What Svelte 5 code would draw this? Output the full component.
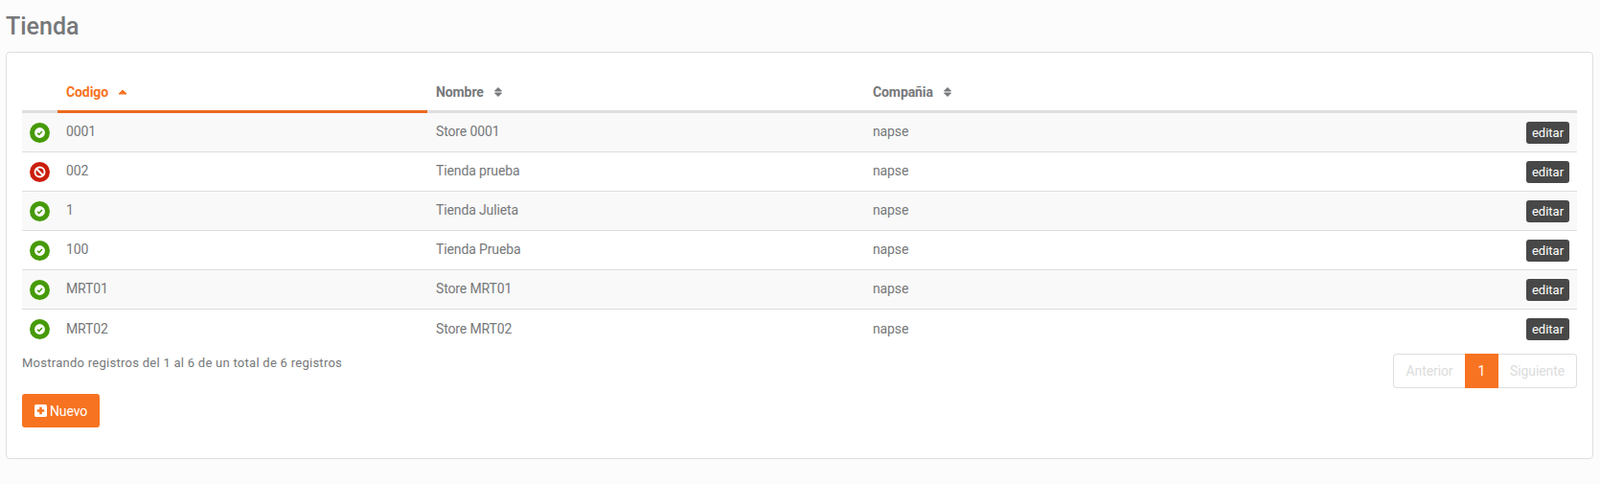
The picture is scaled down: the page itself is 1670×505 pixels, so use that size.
<script>
  const rows = [
    { ok: true, code: '0001', name: 'Store 0001' },
    { ok: false, code: '002', name: 'Tienda prueba' },
    { ok: true, code: '1', name: 'Tienda Julieta' },
    { ok: true, code: '100', name: 'Tienda Prueba' },
    { ok: true, code: 'MRT01', name: 'Store MRT01' },
    { ok: true, code: 'MRT02', name: 'Store MRT02' }
  ];
</script>

<div class="page">
  <h1>Tienda</h1>
  <section class="card">
    <table>
      <thead>
        <tr>
          <th class="st"></th>
          <th class="code active">Codigo<svg class="sort" width="10" height="14" viewBox="0 0 10 14"><path d="M1 9 L5 5 L9 9 Z" fill="#f77321" stroke="#f77321" stroke-linejoin="round"/></svg></th>
          <th class="name">Nombre<svg class="sort" width="10" height="14" viewBox="0 0 10 14"><path d="M1.5 6 L5 2.5 L8.5 6 Z M1.5 8 L5 11.5 L8.5 8 Z" fill="#76787a" stroke="#76787a" stroke-linejoin="round"/></svg></th>
          <th>Compañia<svg class="sort" width="10" height="14" viewBox="0 0 10 14"><path d="M1.5 6 L5 2.5 L8.5 6 Z M1.5 8 L5 11.5 L8.5 8 Z" fill="#76787a" stroke="#76787a" stroke-linejoin="round"/></svg></th>
          <th class="act"></th>
        </tr>
      </thead>
      <tbody>
        {#each rows as r, i}
          <tr class:odd={i % 2 === 0}>
            <td class="st">
              {#if r.ok}
                <svg class="status" width="21" height="21" viewBox="0 0 21 21">
                  <circle cx="10.5" cy="10.5" r="10.5" fill="#469a07"/>
                  <circle cx="10.5" cy="10.5" r="5.4" fill="#fff"/>
                  <path d="M8 10.7 L9.8 12.4 L13 8.9" fill="none" stroke="#469a07" stroke-width="1.5"/>
                </svg>
              {:else}
                <svg class="status" width="21" height="21" viewBox="0 0 21 21">
                  <circle cx="10.5" cy="10.5" r="10.5" fill="#cb1e0c"/>
                  <circle cx="10.5" cy="10.5" r="5" fill="none" stroke="#fff" stroke-width="1.9"/>
                  <path d="M7 7 L14 14" stroke="#fff" stroke-width="1.9"/>
                </svg>
              {/if}
            </td>
            <td class="txt">{r.code}</td>
            <td class="txt">{r.name}</td>
            <td class="txt">napse</td>
            <td class="act"><button class="edit">editar</button></td>
          </tr>
        {/each}
      </tbody>
    </table>

    <div class="foot">
      <div class="info">Mostrando registros del 1 al 6 de un total de 6 registros</div>
      <div class="pager">
        <span class="pg first">Anterior</span>
        <span class="pg cur">1</span>
        <span class="pg last">Siguiente</span>
      </div>
    </div>

    <button class="new">
      <svg width="13" height="13" viewBox="0 0 14 14"><rect width="14" height="14" rx="2" fill="#fff"/><path d="M7 3 V11 M3 7 H11" stroke="#f77321" stroke-width="2.8"/></svg>
      Nuevo
    </button>
  </section>
</div>

<style>
  :global(body) {
    margin: 0;
    background: #fcfcfc;
    font-family: Roboto, "Liberation Sans", sans-serif;
    color: #76787a;
  }
  .page {
    padding: 14px 7px 27px 6px;
    height: 505px;
    box-sizing: border-box;
  }
  h1 {
    margin: 0 0 12px;
    font-size: 25px;
    line-height: 28px;
    font-weight: 500;
    color: #76787a;
  }
  .card {
    height: 425px;
    box-sizing: border-box;
    background: #fff;
    border: 1px solid #dedede;
    border-radius: 4px;
    padding: 21px 16px 0;
  }
  table {
    width: 100%;
    border-collapse: collapse;
    table-layout: fixed;
    font-size: 14px;
  }
  th {
    height: 39px;
    padding: 0 9px;
    text-align: left;
    font-size: 14px;
    font-weight: 700;
    letter-spacing: -0.1px;
    border-bottom: 3px solid #dedede;
  }
  th.active {
    color: #f77321;
    border-bottom-color: #ec6a1c;
  }
  .sort {
    margin-left: 10px;
    vertical-align: -2px;
  }
  .st {
    width: 37px;
    padding: 0;
    text-align: center;
  }
  th.code { width: 368px; }
  th.name { width: 438px; }
  th.act { width: 80px; }
  td {
    height: 40px;
    padding: 0 9px;
    border-bottom: 1px solid #dedede;
    line-height: 20px;
  }
  td.txt { height: 38px; letter-spacing: -0.13px; padding-bottom: 2px; }
  td.st { padding: 0 1px 0 0; }
  tr:last-child td { border-bottom-color: transparent; }
  tr:last-child td.txt { height: 40px; padding-bottom: 0; }
  tr.odd td { background: #f9f9f9; }
  .status { display: block; margin: 0 auto; }
  .act { text-align: right; padding-right: 8px; }
  .edit {
    display: inline-block;
    width: 45px;
    height: 23px;
    padding: 0;
    margin: 0;
    border: 0;
    border-radius: 3px;
    background: #474847;
    color: #fff;
    font: 400 13px/23px Roboto, sans-serif;
    vertical-align: middle;
  }
  .foot {
    display: flex;
    justify-content: space-between;
    align-items: flex-start;
    margin-top: 5px;
  }
  .info { font-size: 13px; letter-spacing: 0.27px; line-height: 20px; }
  .pager {
    display: flex;
    height: 36px;
    font-size: 14px;
    letter-spacing: -0.1px;
  }
  .pg {
    display: flex;
    align-items: center;
    justify-content: center;
    box-sizing: border-box;
    color: #dcdcdc;
    border: 1px solid #dedede;
  }
  .first {
    width: 75px;
    border-right: 0;
    border-radius: 4px 0 0 4px;
  }
  .cur {
    width: 35px;
    background: #f77321;
    border: 0;
    color: #fff;
  }
  .last {
    width: 82px;
    border-left: 0;
    border-radius: 0 4px 4px 0;
  }
  .new {
    display: flex;
    align-items: center;
    justify-content: center;
    gap: 3px;
    width: 81px;
    height: 35px;
    margin-top: 6px;
    padding: 0;
    border: 0;
    border-radius: 3px;
    background: #f77321;
    color: #fff;
    font: 400 14px Roboto, sans-serif;
    letter-spacing: -0.1px;
  }
</style>
